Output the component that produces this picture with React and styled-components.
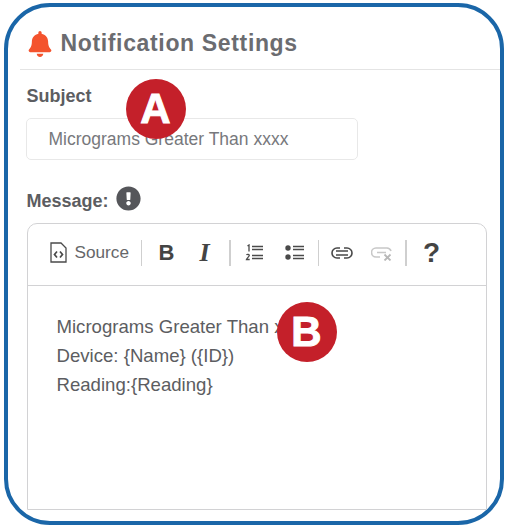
import styled, { createGlobalStyle } from "styled-components"
import { FaBell, FaExclamationCircle } from "react-icons/fa"

const Global = createGlobalStyle`
    html, body {
        margin: 0;
        background: #fff;
    }
    body {
        font-family: "Liberation Sans", Arial, sans-serif;
    }
`

const SourceIcon = () => (
    <svg width="17" height="21" viewBox="0 0 17 21" fill="none" stroke="#4a4a4a" strokeWidth="1.3">
        <path d="M1 1h10l5 5v14H1z" />
        <path d="M7 9.500 4.500 12.500 7 15.500M10 9.500l2.500 3-2.500 3" strokeWidth="1.7" />
    </svg>
)

const NumberedIcon = () => (
    <svg width="19" height="18" viewBox="0 0 19 18" fill="none" stroke="#4a4a4a" strokeWidth="1.3">
        <path d="M7 2.500h11M7 5.500h11M7 11.500h11M7 14.500h11" />
        <path d="M2.500 2 4 1v6.500" />
        <path d="M1.500 11c.8-1.200 3-.8 2.700.7-.2 1-2.200 2-2.700 3.800h3.200" />
    </svg>
)

const BulletIcon = () => (
    <svg width="20" height="18" viewBox="0 0 20 18" fill="none" stroke="#4a4a4a" strokeWidth="1.3">
        <circle cx="3" cy="4" r="2.700" fill="#4a4a4a" stroke="none" />
        <circle cx="3" cy="13" r="2.700" fill="#4a4a4a" stroke="none" />
        <path d="M8 2.500h11M8 5.500h11M8 11.500h11M8 14.500h11" />
    </svg>
)

const LinkIcon = ({ off }) => (
    <svg width="22" height="16" viewBox="0 0 22 16" fill="none" stroke={off ? "#c8c8c8" : "#4a4a4a"} strokeWidth="1.6">
        {off ? (
            <>
                <path d="M9 12H5a4.500 4.500 0 0 1 0-9h11a4.500 4.500 0 0 1 4 3" />
                <path d="M6 7.500h9" />
                <path d="M13.500 9.500l6 6M19.500 9.500l-6 6" stroke="#b8b8b8" strokeWidth="1.800" />
            </>
        ) : (
            <>
                <path d="M9 3H6a5 5 0 0 0 0 10h3" />
                <path d="M13 3h3a5 5 0 0 1 0 10h-3" />
                <path d="M5 6h12M5 10h12" />
            </>
        )}
    </svg>
)

const App = () => {
    return (
        <>
            <Global />
            <Page>
                <Frame>
                    <Header>
                        <FaBell size={26} color="#f4532d" />
                        <Title>Notification Settings</Title>
                    </Header>
                    <Body>
                        <Label>Subject</Label>
                        <InputBox>Micrograms Greater Than xxxx</InputBox>
                        <MessageRow>
                            <MessageLabel>Message:</MessageLabel>
                            <FaExclamationCircle size={25} color="#55565a" />
                        </MessageRow>
                        <Editor>
                            <Toolbar>
                                <ToolGroup $right={12}>
                                    <SourceIcon />
                                    <SourceText>Source</SourceText>
                                </ToolGroup>
                                <Sep />
                                <ToolGroup $left={16} $right={18} $gap={24}>
                                    <Bold>B</Bold>
                                    <Italic>I</Italic>
                                </ToolGroup>
                                <Sep />
                                <ToolGroup $left={14} $right={13} $gap={21}>
                                    <NumberedIcon />
                                    <BulletIcon />
                                </ToolGroup>
                                <Sep />
                                <ToolGroup $left={12} $right={12} $gap={18}>
                                    <LinkIcon />
                                    <LinkIcon off />
                                </ToolGroup>
                                <Sep />
                                <ToolGroup $left={16}>
                                    <Help>?</Help>
                                </ToolGroup>
                            </Toolbar>
                            <Content>
                                <div>Micrograms Greater Than xxxx</div>
                                <div>Device: {"{Name}"} ({"{ID}"})</div>
                                <div>Reading:{"{Reading}"}</div>
                            </Content>
                        </Editor>
                    </Body>
                    <Badge $left={118} $top={72}>A</Badge>
                    <Badge $left={269} $top={295}>B</Badge>
                </Frame>
            </Page>
        </>
    )
}

export default App

const Page = styled.div`
    width: 509px;
    height: 528px;
    padding: 3px 5px 3px 3.500px;
    box-sizing: border-box;
    overflow: hidden;
`
const Frame = styled.div`
    position: relative;
    height: 100%;
    box-sizing: border-box;
    border: 4.500px solid #1a66a8;
    border-radius: 46px;
    overflow: hidden;
    background: #fff;
`
const Header = styled.div`
    display: flex;
    align-items: center;
    gap: 8px;
    height: 63px;
    box-sizing: border-box;
    margin-left: 12px;
    padding: 11px 0 0 7px;
    border-bottom: 1px solid #e4e4e4;
`
const Title = styled.div`
    font-size: 23px;
    font-weight: bold;
    letter-spacing: 0.65px;
    color: #6b6c70;
`
const Body = styled.div`
    display: flex;
    flex-direction: column;
    padding: 15px 0 0 19px;
`
const Label = styled.div`
    font-size: 18px;
    font-weight: bold;
    line-height: 22px;
    color: #5c5d61;
`
const MessageLabel = styled(Label)`
    line-height: 20px;
`
const InputBox = styled.div`
    width: 332px;
    height: 42px;
    margin: 11px 0 0 -1px;
    padding-left: 22px;
    box-sizing: border-box;
    display: flex;
    align-items: center;
    border: 1px solid #e8e8e8;
    border-radius: 5px;
    font-size: 17.500px;
    color: #77787c;
`
const MessageRow = styled.div`
    display: flex;
    align-items: flex-end;
    gap: 7px;
    margin-top: 26px;
    height: 25px;
`
const Editor = styled.div`
    width: 460px;
    height: 287px;
    margin-top: 12px;
    box-sizing: border-box;
    border: 1px solid #d2d2d4;
    border-radius: 10px 10px 0 0;
`
const Toolbar = styled.div`
    display: flex;
    align-items: center;
    height: 62px;
    box-sizing: border-box;
    padding: 0 0 4px 22px;
    border-bottom: 1px solid #d2d2d4;
`
const ToolGroup = styled.div`
    display: flex;
    align-items: center;
    gap: ${p => p.$gap || 8}px;
    padding: 0 ${p => p.$right || 0}px 0 ${p => p.$left || 0}px;
`
const SourceText = styled.span`
    font-size: 17.200px;
    color: #66676a;
`
const Sep = styled.div`
    width: 1.500px;
    height: 26px;
    background: #cfcfcf;
`
const Bold = styled.span`
    width: 15px;
    font-size: 22px;
    font-weight: bold;
    color: #444;
`
const Italic = styled.span`
    width: 14px;
    font-size: 26px;
    font-weight: bold;
    font-style: italic;
    font-family: "Liberation Serif", serif;
    text-align: center;
    color: #444;
`
const Help = styled.span`
    font-size: 28px;
    font-weight: bold;
    color: #444;
`
const Content = styled.div`
    padding: 26px 0 0 29px;
    font-size: 18.600px;
    line-height: 29px;
    color: #5c5d61;
`
const Badge = styled.div`
    position: absolute;
    left: ${p => p.$left}px;
    top: ${p => p.$top}px;
    width: 60px;
    height: 60px;
    border-radius: 50%;
    background: #c4202a;
    color: #fff;
    display: flex;
    align-items: center;
    justify-content: center;
    font-size: 42px;
    font-weight: bold;
    -webkit-text-stroke: 1px #fff;
`
